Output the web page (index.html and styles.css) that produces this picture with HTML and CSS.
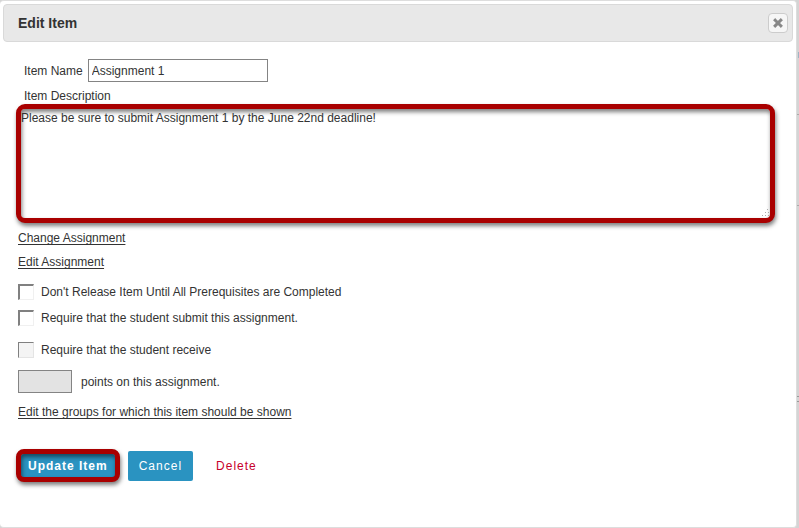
FILE: index.html
```html
<!DOCTYPE html>
<html lang="en">
<head>
<meta charset="utf-8">
<title>Edit Item</title>
<link rel="stylesheet" href="styles.css">
</head>
<body>
<main class="dialog" role="dialog" aria-labelledby="dialog-title">
  <header class="titlebar">
    <h1 class="title" id="dialog-title">Edit Item</h1>
    <button class="close" type="button" aria-label="Close">
      <svg class="close-icon" viewBox="0 0 10 10" aria-hidden="true"><path d="M2.2 2.2l5.6 5.6M7.8 2.2L2.2 7.8"/></svg>
    </button>
  </header>
  <form class="form">
    <div class="name-row">
      <label for="name">Item Name</label>
      <input class="name-input" id="name" type="text" value="Assignment 1">
    </div>
    <label class="description-label" for="description">Item Description</label>
    <div class="description-box">
      <textarea class="description" id="description" spellcheck="false">Please be sure to submit Assignment 1 by the June 22nd deadline!</textarea>
      <svg class="grip" viewBox="0 0 8 8" aria-hidden="true"><path d="M6 0h1v1H6zM4 3h1v1H4zM7 3h1v1H7zM1 6h1v1H1zM4 6h1v1H4zM7 6h1v1H7z"/></svg>
    </div>
    <div class="links">
      <a class="link" href="#">Change Assignment</a>
      <a class="link" href="#">Edit Assignment</a>
    </div>
    <div class="option">
      <input class="check" id="release" type="checkbox">
      <label for="release">Don't Release Item Until All Prerequisites are Completed</label>
    </div>
    <div class="option">
      <input class="check" id="submit" type="checkbox">
      <label for="submit">Require that the student submit this assignment.</label>
    </div>
    <div class="option option-receive">
      <input class="check" id="receive" type="checkbox" disabled>
      <label for="receive">Require that the student receive</label>
    </div>
    <div class="points-row">
      <input class="points" id="points" type="text" disabled>
      <label for="points">points on this assignment.</label>
    </div>
    <a class="link" href="#">Edit the groups for which this item should be shown</a>
    <div class="actions">
      <button class="button button-update" type="button">Update Item</button>
      <button class="button button-cancel" type="button">Cancel</button>
      <button class="button button-delete" type="button">Delete</button>
    </div>
  </form>
</main>
</body>
</html>
```
FILE: styles.css
```css
* {
  box-sizing: border-box;
}

body {
  margin: 0;
  min-height: 100vh;
  display: flex;
  padding-right: 2px;
  /* edges of the page rows that show beside the dialog */
  background:
    linear-gradient(#9fb4c4, #9fb4c4) right 52px / 1px 6px no-repeat,
    linear-gradient(#aaa, #aaa) right 114px / 2px 1px no-repeat,
    linear-gradient(#aaa, #aaa) right 205px / 2px 1px no-repeat,
    linear-gradient(#999, #999) right 396px / 2px 1px no-repeat,
    linear-gradient(#999, #999) right 401px / 2px 1px no-repeat,
    #d4d4d4;
  color: #333;
  font: 12px/16px "Liberation Sans", Arial, sans-serif;
}

input,
textarea,
button {
  margin: 0;
  font: inherit;
  color: inherit;
}

.dialog {
  flex: 1;
  padding: 3px;
  border: 1px solid #ddd;
  border-left: 0;
  border-radius: 4px;
  background: #fff;
}

.titlebar {
  display: flex;
  align-items: center;
  justify-content: space-between;
  height: 38px;
  padding: 0 4px 0 14px;
  border: 1px solid #d9d9d9;
  border-radius: 4px;
  background: #e8e8e8;
}

.title {
  margin: 0;
  font-size: 14px;
  line-height: 20px;
}

.close {
  display: grid;
  place-items: center;
  width: 20px;
  height: 20px;
  padding: 0;
  border: 1px solid #ccc;
  border-radius: 4px;
  background: #f6f6f6;
}

.close-icon {
  width: 10px;
  height: 10px;
  fill: none;
  stroke: #888;
  stroke-width: 3;
  stroke-linecap: square;
}

.form {
  padding: 17px 18px 16px 15px;
}

.name-row {
  display: flex;
  align-items: center;
  gap: 5px;
  padding-left: 6px;
}

.name-input {
  width: 180px;
  height: 23px;
  padding: 0 3px;
  border: 1px solid #848484;
  background: #fff;
}

.description-label {
  display: block;
  margin: 6px 0 0 6px;
}

.description-box {
  position: relative;
  margin: 0 0 0 -2px;
}

.description {
  display: block;
  width: 100%;
  height: 119px;
  padding: 1px 0 0;
  border: 5px solid #a90000;
  border-radius: 9px;
  outline: 0;
  resize: none;
  background: #fff;
  box-shadow: 1px 3px 4px rgba(0, 0, 0, .5), inset 1px 3px 4px rgba(0, 0, 0, .5);
}

.grip {
  position: absolute;
  right: 6px;
  bottom: 6px;
  width: 8px;
  height: 8px;
  fill: #aaa;
}

.links {
  display: grid;
  justify-items: start;
  gap: 8px;
  margin: 7px 0 14px;
}

.link {
  color: #333;
  text-decoration: underline;
  text-underline-offset: 2px;
}

.option {
  display: flex;
  align-items: center;
  gap: 7px;
  margin-bottom: 10px;
}

.option-receive {
  margin-top: 16px;
}

.check {
  appearance: none;
  width: 16px;
  height: 16px;
  border: 1px solid #f0f0f0;
  border-top: 2px solid #808080;
  border-left: 2px solid #808080;
  background: #fff;
}

.check:disabled {
  border-top-width: 1px;
  border-left-width: 1px;
  border-right-color: #e4e4e4;
  border-bottom-color: #e4e4e4;
  background: #f4f4f4;
}

.points-row {
  display: flex;
  align-items: center;
  gap: 9px;
  margin: 12px 0 11px;
}

.points {
  width: 54px;
  height: 23px;
  border: 1px solid #848484;
  background: #e3e3e3;
}

.actions {
  display: flex;
  align-items: center;
  gap: 8px;
  margin: 29px 0 0 -2px;
}

.button {
  height: 30px;
  padding: 0 11px;
  border: 0;
  border-radius: 2px;
  letter-spacing: 1px;
}

.button-update {
  height: 33px;
  padding: 0 7px;
  border: 5px solid #a90000;
  border-radius: 8px;
  background: #2a93c1;
  color: #fff;
  font-weight: bold;
  box-shadow: 1px 3px 4px rgba(0, 0, 0, .5), inset 1px 3px 4px rgba(0, 0, 0, .5);
}

.button-cancel {
  background: #2a93c1;
  color: #fff;
}

.button-delete {
  margin-left: 4px;
  background: transparent;
  color: #c7002b;
}
```
